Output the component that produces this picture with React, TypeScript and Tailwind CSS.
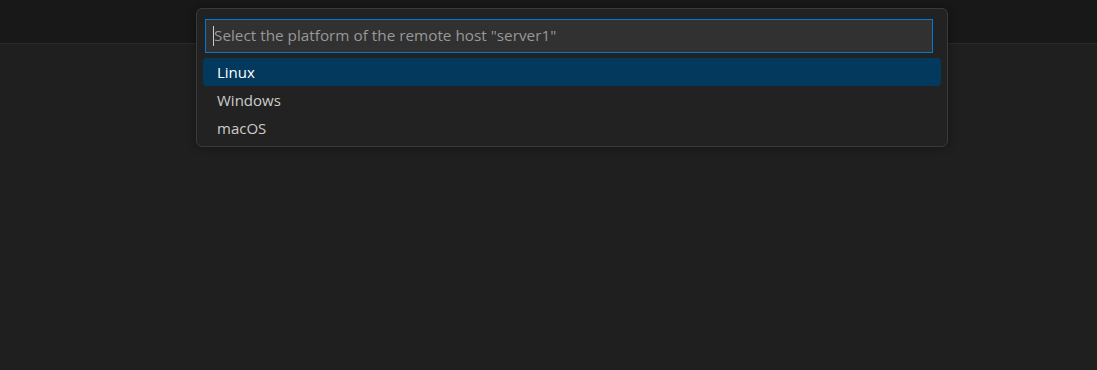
export default function App() {
  const items = ["Linux", "Windows", "macOS"];
  return (
    <div
      className="relative h-[370px] w-full bg-[#1f1f1f] flex flex-col"
      style={{ fontFamily: '"Open Sans", "Noto Sans", sans-serif' }}
    >
      <div className="h-[44px] shrink-0 bg-[#181818] border-b border-[#2b2b2b]" />
      <div className="flex-1" />
      {/* quick pick overlay */}
      <div className="absolute left-[196px] top-[8px] w-[752px] rounded-[6px] border border-[#3a3a3a] bg-[#222222] px-[6px] pt-[10px] pb-[4px] shadow-[0_0_8px_rgba(0,0,0,0.36)]">
        <div className="mx-[2px] mr-[8px] h-[34px] border border-[#0078d4] bg-[#313131] flex items-center pl-[7px]">
          <span className="w-px h-[20px] bg-[#cccccc]" />
          <span className="text-[15.3px] text-[#989898] leading-none">
            Select the platform of the remote host "server1"
          </span>
        </div>
        <ul className="mt-[5px]">
          {items.map((it, i) => (
            <li
              key={it}
              className={
                "h-[28px] flex items-center pl-[14px] rounded-[4px] text-[15px] " +
                (i === 0 ? "bg-[#04395e] text-white" : "text-[#cccccc]")
              }
            >
              {it}
            </li>
          ))}
        </ul>
      </div>
    </div>
  );
}
